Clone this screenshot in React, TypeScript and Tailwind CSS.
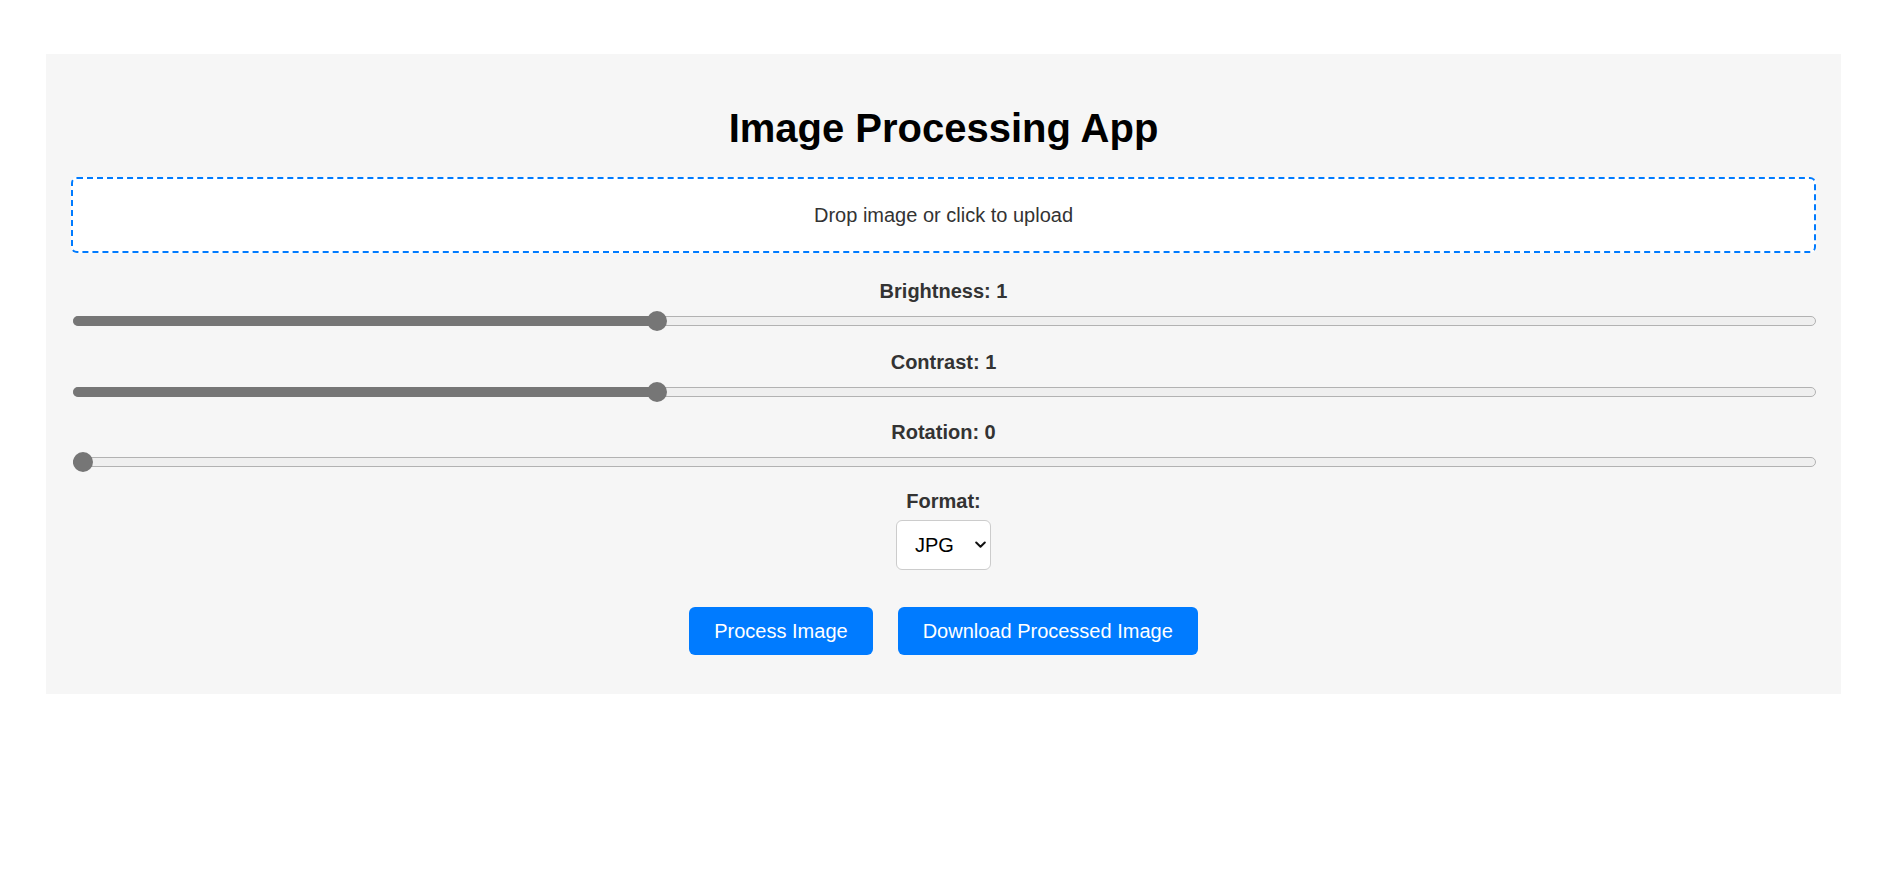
import { useState } from 'react';

const TRACK_W = 1743;
const THUMB = 20;

interface SliderProps {
  label: string;
  value: number;
  min: number;
  max: number;
}

function SliderField({ label, value, min, max }: SliderProps) {
  const pct = (value - min) / (max - min);
  const thumbLeft = pct * (TRACK_W - THUMB);

  return (
    <div className="h-[70.5px]">
      <div className="text-center text-[20px] font-bold leading-[23px] text-[#333]">
        {label}: {value}
      </div>
      <div className="relative mt-[8px] ml-[2px] h-[20px]">
        <div className="absolute inset-x-0 top-[5px] h-[10px] rounded-full border border-[#b2b2b2] bg-[#efefef]" />
        <div
          className="absolute left-0 top-[5px] h-[10px] rounded-l-full bg-[#767676]"
          style={{ width: thumbLeft + THUMB / 2 }}
        />
        <div
          className="absolute top-0 h-[20px] w-[20px] rounded-full bg-[#767676]"
          style={{ left: thumbLeft }}
        />
      </div>
    </div>
  );
}

export default function App() {
  const [format, setFormat] = useState('jpg');

  return (
    <div className="min-h-screen bg-white pt-[54px] font-['Liberation_Sans',Arial,sans-serif]">
      <div className="ml-[46px] h-[640px] w-[1795px] bg-[#f6f6f6] px-[25px] pt-[51px]">
        <h1 className="text-center text-[40px] font-bold leading-[46px] text-black">
          Image Processing App
        </h1>

        <div className="mt-[26px] rounded-[6px] border-2 border-dashed border-[#007bff] bg-white py-[24px] text-center text-[20px] leading-[24px] text-[#333]">
          Drop image or click to upload
        </div>

        <div className="mt-[27px]">
          <SliderField label="Brightness" value={1} min={0} max={3} />
          <SliderField label="Contrast" value={1} min={0} max={3} />
          <SliderField label="Rotation" value={0} min={0} max={360} />
        </div>

        <div className="-mt-[1.5px] flex flex-col items-center">
          <label htmlFor="format" className="text-[20px] font-bold leading-[23px] text-[#333]">
            Format:
          </label>
          <div className="relative mt-[7px]">
            <select
              id="format"
              value={format}
              onChange={(e) => setFormat(e.target.value)}
              className="h-[50px] w-[95px] appearance-none rounded-[6px] border border-[#ccc] bg-white pl-[18px] text-[20px] text-black outline-none"
            >
              <option value="jpg">JPG</option>
              <option value="png">PNG</option>
              <option value="webp">WEBP</option>
            </select>
            <svg
              className="pointer-events-none absolute right-[5px] top-[21px]"
              width="11"
              height="8"
              viewBox="0 0 11 8"
              fill="none"
            >
              <path d="M1.2 1.5L5.5 5.8L9.8 1.5" stroke="#111" strokeWidth="2" strokeLinecap="round" strokeLinejoin="round" />
            </svg>
          </div>
        </div>

        <div className="mt-[37px] flex justify-center gap-[25px]">
          <button className="rounded-[6px] bg-[#007bff] px-[25px] py-[12.5px] text-[20px] leading-[23px] text-white">
            Process Image
          </button>
          <button className="rounded-[6px] bg-[#007bff] px-[25px] py-[12.5px] text-[20px] leading-[23px] text-white">
            Download Processed Image
          </button>
        </div>
      </div>
    </div>
  );
}
